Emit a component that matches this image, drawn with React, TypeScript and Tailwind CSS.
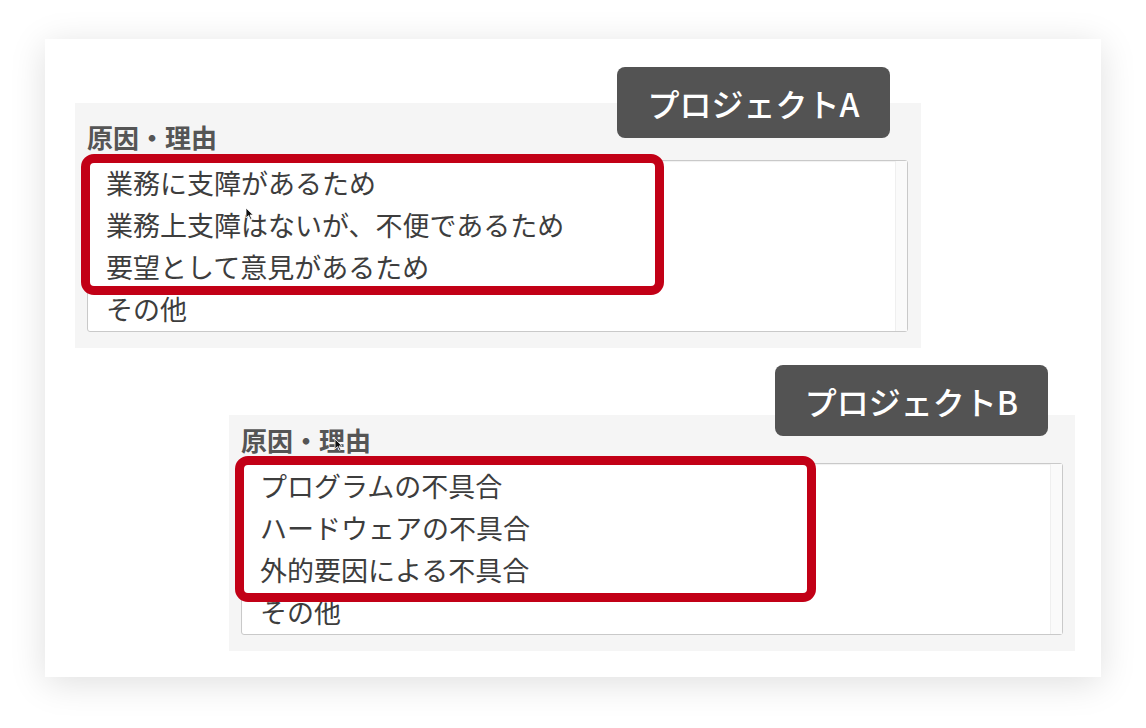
import React from "react";

const jp = { fontFamily: '"Noto Sans CJK JP", "Noto Sans", sans-serif' };

function Cursor({ className }: { className: string }) {
  return (
    <svg
      className={`absolute ${className}`}
      width="9"
      height="13"
      viewBox="0 0 9 13"
    >
      <path d="M1 1 L1 11 L3.5 8.6 L5.4 12.4 L6.8 11.7 L5 8 L8.2 8 Z" fill="#111" stroke="#fff" strokeWidth="0.8" />
    </svg>
  );
}

function ListBox({
  items,
  highlight,
  cursor,
}: {
  items: string[];
  highlight: string;
  cursor?: string;
}) {
  return (
    <div className="relative h-[172px] rounded-[3px] border border-[#c9c9c9] bg-white shadow-[inset_0_1px_1px_rgba(0,0,0,0.06)]">
      <div className="flex h-full">
        <div className="flex-1">
          {items.map((t) => (
            <div
              key={t}
              className="flex h-[42px] items-center pl-[18px] text-[27px] leading-none text-[#3d3d3d]"
            >
              {t}
            </div>
          ))}
        </div>
        <div className="w-[12px] border-l border-[#efefef] bg-[#fafafa]" />
      </div>
      <div
        className={`pointer-events-none absolute rounded-[13px] border-[9px] border-[#c20016] ${highlight}`}
      />
      {cursor && <Cursor className={cursor} />}
    </div>
  );
}

function Panel({
  badge,
  items,
  wrap,
  top,
  highlight,
  cursor,
  labelCursor,
}: {
  badge: string;
  items: string[];
  wrap: string;
  top: string;
  highlight: string;
  cursor?: string;
  labelCursor?: string;
}) {
  return (
    <div className={`relative bg-[#f5f5f5] ${wrap}`}>
      <div
        className={`absolute flex h-[71px] w-[273px] items-center justify-center rounded-[8px] bg-[#535353] text-[32px] font-medium text-white ${top}`}
      >
        {badge}
      </div>
      <div className="relative text-[26px] font-bold leading-[30px] text-[#555555]">
        原因・理由
        {labelCursor && <Cursor className={labelCursor} />}
      </div>
      <div className="mt-[8px]">
        <ListBox items={items} highlight={highlight} cursor={cursor} />
      </div>
    </div>
  );
}

export default function App() {
  return (
    <div className="h-[728px] w-[1146px] bg-white pl-[45px] pt-[39px]" style={jp}>
      <div className="h-[638px] w-[1056px] bg-white pt-[64px] shadow-[0_6px_34px_rgba(0,0,0,0.13)]">
        <Panel
          badge="プロジェクトA"
          wrap="ml-[30px] h-[245px] w-[846px] pl-[12px] pr-[13px] pt-[19px]"
          top="left-[542px] top-[-36px]"
          items={[
            "業務に支障があるため",
            "業務上支障はないが、不便であるため",
            "要望として意見があるため",
            "その他",
          ]}
          highlight="left-[-7px] top-[-7px] h-[141px] w-[583px]"
          cursor="left-[157px] top-[46px]"
        />
        <Panel
          badge="プロジェクトB"
          wrap="ml-[184px] mt-[67px] h-[236px] w-[846px] px-[12px] pt-[10px]"
          top="left-[546px] top-[-50px]"
          items={[
            "プログラムの不具合",
            "ハードウェアの不具合",
            "外的要因による不具合",
            "その他",
          ]}
          highlight="left-[-7px] top-[-8px] h-[146px] w-[581px]"
          labelCursor="left-[93px] top-[13px]"
        />
      </div>
    </div>
  );
}
